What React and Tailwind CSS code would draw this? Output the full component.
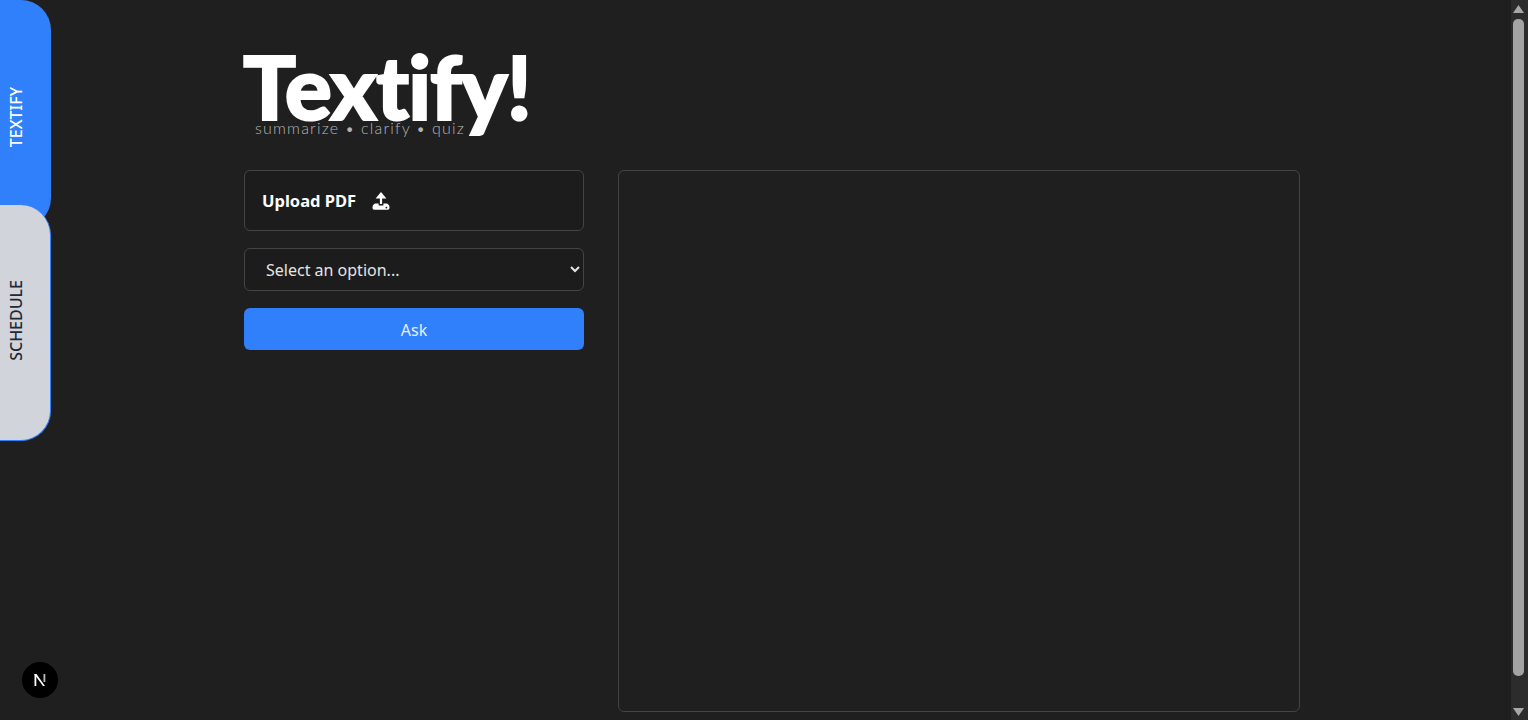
import React from "react";

function UploadIcon() {
  return (
    <svg width="20" height="20" viewBox="0 0 20 20" fill="none">
      <path d="M10 1 L4.6 7.4 H8.9 V13 H11.1 V7.4 H15.4 Z" fill="#fff" />
      <path d="M4 12.5 H7.6 V14.6 H12.4 V12.5 H16 Q18.6 13.4 18.6 16.4 Q18.6 18.8 16.6 18.8 H3.4 Q1.4 18.8 1.4 16.4 Q1.4 13.4 4 12.5 Z" fill="#fff" />
      <circle cx="15.4" cy="16.6" r="0.9" fill="#1c1c1c" />
    </svg>
  );
}

function Scrollbar() {
  return (
    <div className="w-[17px] h-full bg-[#2c2c2c] flex flex-col items-start pl-[2px] shrink-0">
      <svg width="11" height="8" viewBox="0 0 11 8" className="mt-[5px] shrink-0">
        <path d="M5.5 0 L11 8 H0 Z" fill="#a8a8a8" />
      </svg>
      <div className="w-[11px] flex-1 bg-[#a3a3a3] rounded-[5px] mt-[6px] mb-[32px]" />
      <svg width="11" height="8" viewBox="0 0 11 8" className="mb-[4px] shrink-0">
        <path d="M0 0 H11 L5.5 8 Z" fill="#a8a8a8" />
      </svg>
    </div>
  );
}

export default function App() {
  return (
    <div className="relative flex w-full h-[720px] overflow-hidden bg-[#1f1f1f] text-white [font-family:'Noto_Sans','Open_Sans',sans-serif]">
      <aside className="w-[51px] shrink-0 flex flex-col">
        <div className="h-[228px] bg-[#307ffb] rounded-r-[30px] flex items-center pl-[8px] pt-[7px]">
          <span className="[writing-mode:vertical-rl] rotate-180 text-[16px] font-medium leading-[16px] text-white">TEXTIFY</span>
        </div>
        <div className="-mt-[23px] z-10 h-[236px] bg-[#d1d5db] rounded-r-[30px] border-r border-b border-[#307ffb] flex items-center pl-[8px] pb-[4px]">
          <span className="[writing-mode:vertical-rl] rotate-180 text-[16px] font-medium leading-[16px] text-[#1f2937]">SCHEDULE</span>
        </div>
      </aside>

      <main className="flex-1 min-w-0 pl-[193px] pt-[44px]">
        <div className="relative h-[126px] w-[300px]">
          <div className="absolute left-[-1px] top-[-12px] text-[88px] leading-[108px] font-black tracking-[-1px] text-white whitespace-nowrap [font-family:'Lato','Noto_Sans',sans-serif] [-webkit-text-stroke:2px_white]">
            Textify!
          </div>
          <div className="absolute left-[11px] top-[74px] text-[16px] leading-[20px] font-light tracking-[1.2px] text-[#b4b4b4] whitespace-nowrap [font-family:'Lato',sans-serif]">
            summarize • clarify • quiz
          </div>
        </div>

        <div className="flex gap-[34px]">
          <div className="w-[340px] flex flex-col">
            <div className="h-[61px] border border-[#444444] rounded-md bg-[#1c1c1c] flex items-center pl-[17px] gap-[15px]">
              <span className="font-bold text-[16.5px] text-white pt-[1px]">Upload PDF</span>
              <UploadIcon />
            </div>
            <select className="mt-[17px] h-[43px] w-full border border-[#444444] rounded-md bg-[#1c1c1c] pl-[17px] pr-[4px] text-[16px] text-[#e5e5e5] outline-none">
              <option>Select an option...</option>
            </select>
            <button className="mt-[17px] h-[42px] w-full rounded-md bg-[#307ffb] text-[16px] text-[#e8f0ff] pt-[2px]">Ask</button>
          </div>
          <div className="w-[682px] h-[542px] border border-[#444444] rounded-md bg-[#1f1f1f]" />
        </div>
      </main>

      <Scrollbar />

      <div className="absolute left-[22px] top-[662px] w-9 h-9 rounded-full bg-black flex items-center justify-center">
        <svg width="16" height="16" viewBox="0 0 16 16">
          <path d="M2.5 2 H4.5 L13 14 H11 L2.5 2.6 Z" fill="#fff" />
          <rect x="2.5" y="2" width="1.8" height="12" fill="#fff" />
          <rect x="11.5" y="2" width="1.8" height="8" fill="#bbb" />
        </svg>
      </div>
    </div>
  );
}
